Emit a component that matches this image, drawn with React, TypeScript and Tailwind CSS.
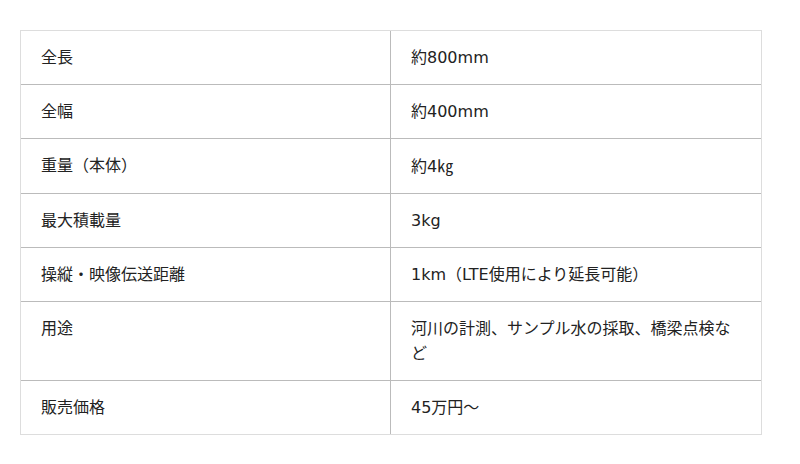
const specs: [string, React.ReactNode][] = [
  ['全長', '約800mm'],
  ['全幅', '約400mm'],
  ['重量（本体）', <>約4<span className="font-['Noto_Sans_CJK_JP',sans-serif]">㎏</span></>],
  ['最大積載量', '3kg'],
  ['操縦・映像伝送距離', '1km（LTE使用により延長可能）'],
  ['用途', '河川の計測、サンプル水の採取、橋梁点検など'],
  ['販売価格', '45万円〜'],
];

export default function App() {
  return (
    <div className="min-h-[464px] bg-white pt-[30px] pl-[20px] text-[16px] leading-[25px] text-[#222] font-['DejaVu_Sans','Noto_Sans_CJK_JP',sans-serif]">
      <div className="w-[742px] border border-[#ddd] grid grid-cols-[370px_1fr]">
        {specs.map(([label, value], i) => (
          <div key={label} className="contents">
            <div className={`px-5 py-[14px] border-r border-[#bbb] ${i > 0 ? 'border-t' : ''}`}>{label}</div>
            <div className={`px-5 py-[14px] border-[#bbb] ${i > 0 ? 'border-t' : ''}`}>{value}</div>
          </div>
        ))}
      </div>
    </div>
  );
}
